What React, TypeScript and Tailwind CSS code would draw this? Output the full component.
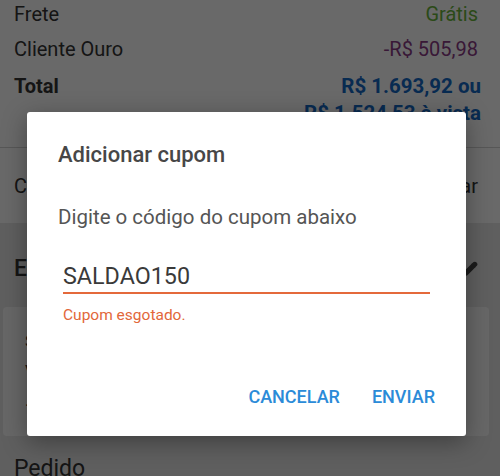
import { Pencil } from "lucide-react";

const font = { fontFamily: "Roboto, 'Noto Sans', sans-serif" };

function SummaryRow({ label, value, valueClass }: { label: string; value: string; valueClass: string }) {
  return (
    <div className="flex h-[35.5px] items-center justify-between text-[20px]">
      <span className="text-[#333]">{label}</span>
      <span className={valueClass}>{value}</span>
    </div>
  );
}

export default function App() {
  return (
    <div style={font} className="relative h-[476px] w-[500px] overflow-hidden bg-[#e6e6e6]">
      {/* Order summary */}
      <div className="bg-white">
        <div className="mt-[-4px] pl-[14px] pr-[22px]">
          <SummaryRow label="Frete" value="Grátis" valueClass="text-[#6ab43c]" />
          <SummaryRow label="Cliente Ouro" value="-R$ 505,98" valueClass="text-[#8a3b86]" />
          <div className="flex items-start justify-between pt-[6px] pb-[20px] text-[20px] font-bold leading-[27px]">
            <span className="text-[#333]">Total</span>
            <div className="mr-[-3px] flex flex-col items-end text-[20.5px] text-[#1468c4]">
              <span>R$ 1.693,92 ou</span>
              <span>R$ 1.524,53 à vista</span>
            </div>
          </div>
        </div>
        <div className="h-px bg-[#d4d4d4]" />
        <div className="flex h-[75px] items-center justify-between pl-[14px] pr-[22px] text-[20px] text-[#333]">
          <span>Cupom de desconto</span>
          <span>Adicionar</span>
        </div>
      </div>

      {/* Delivery */}
      <div className="flex h-[84px] items-center justify-between pl-[14px] pr-[22px] pt-[8px]">
        <span className="text-[23px] font-medium text-[#333]">Endereço de entrega</span>
        <Pencil className="h-[16px] w-[16px] text-[#444]" fill="#444" />
      </div>
      <div className="ml-[3px] mr-[11px] flex h-[129px] flex-col justify-center gap-[4px] rounded-[4px] bg-[#fafafa] px-[22px] text-[17px] text-[#333]">
        <span>Slot de entrega</span>
        <span>Vila Mariana, São Paulo</span>
        <span>...</span>
      </div>
      <div className="pl-[14px] pt-[16px] text-[23px] text-[#333]">Pedido</div>

      {/* Dim overlay */}
      <div className="absolute inset-0 bg-black/[0.59]" />

      {/* Dialog */}
      <div className="absolute left-[27px] top-[112px] w-[439px] rounded-[3px] bg-white shadow-[0_6px_24px_rgba(0,0,0,0.35)]">
        <div className="px-[31px] pt-[29px] text-[22px] font-medium leading-[28px] text-[#474747]">
          Adicionar cupom
        </div>
        <div className="px-[31px] pt-[36px] text-[20.5px] leading-[24px] text-[#555]">
          Digite o código do cupom abaixo
        </div>
        <div className="mx-[36px] mt-[33px] border-b-[2px] border-[#e4693b] pb-[2px] text-[23.3px] leading-[28px] text-[#3a3a3a]">
          SALDAO150
        </div>
        <div className="px-[36px] pt-[11px] text-[15.5px] leading-[20px] text-[#e2673a]">
          Cupom esgotado.
        </div>
        <div className="flex justify-end gap-[32px] pr-[31px] pt-[61px] pb-[28px] text-[18px] font-medium leading-[22px] text-[#2b8bd8]">
          <span>CANCELAR</span>
          <span>ENVIAR</span>
        </div>
      </div>
    </div>
  );
}
